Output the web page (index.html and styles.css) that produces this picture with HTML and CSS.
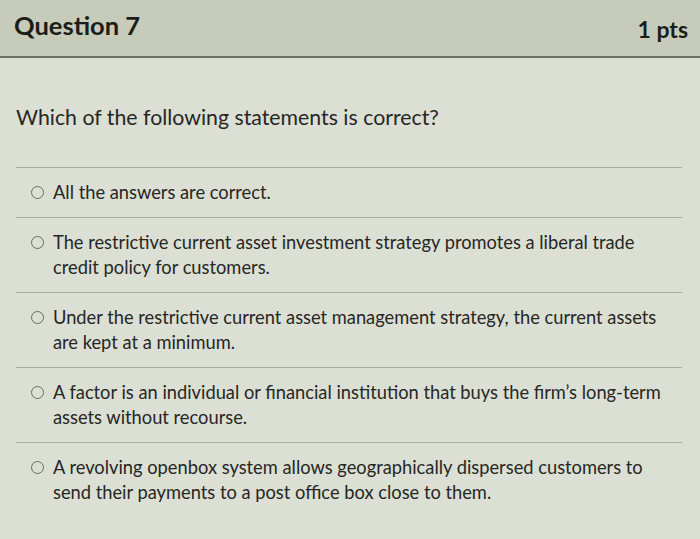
FILE: index.html
```html
<!DOCTYPE html>
<html>
<head>
<meta charset="utf-8">
<link rel="stylesheet" href="styles.css">
</head>
<body>
<div class="quiz">
  <div class="header">
    <div class="title">Question 7</div>
    <div class="pts">1 pts</div>
  </div>
  <div class="content">
    <p class="question">Which of the following statements is correct?</p>
    <ul class="answers">
      <li class="answer"><span class="radio"></span><span class="label">All the answers are correct.</span></li>
      <li class="answer"><span class="radio"></span><span class="label">The restrictive current asset investment strategy promotes a liberal trade credit policy for customers.</span></li>
      <li class="answer"><span class="radio"></span><span class="label">Under the restrictive current asset management strategy, the current assets are kept at a minimum.</span></li>
      <li class="answer"><span class="radio"></span><span class="label">A factor is an individual or financial institution that buys the firm’s long-term assets without recourse.</span></li>
      <li class="answer"><span class="radio"></span><span class="label">A revolving openbox system allows geographically dispersed customers to send their payments to a post office box close to them.</span></li>
    </ul>
  </div>
</div>
</body>
</html>
```

FILE: styles.css
```css
html, body {
  margin: 0;
  padding: 0;
  background: #dcdfd3;
}
body {
  width: 700px;
  height: 539px;
  overflow: hidden;
  font-family: Lato, "Open Sans", sans-serif;
  color: #262724;
}
.quiz {
  width: 700px;
  height: 539px;
  background: #dcdfd3;
}
.header {
  height: 56px;
  background: #c7cbb9;
  border-bottom: 2px solid #6d6f67;
  display: flex;
  justify-content: space-between;
  align-items: center;
  padding: 0 12px 0 14px;
  box-sizing: content-box;
}
.title {
  font-size: 25.5px;
  font-weight: 700;
  color: #1c1d1a;
  margin-top: -6px;
}
.pts {
  font-size: 23px;
  font-weight: 700;
  color: #1c1d1a;
  margin-top: 2px;
}
.content {
  padding: 0 18px 0 16px;
}
.question {
  margin: 0;
  padding: 45px 0 36px 0;
  font-size: 21.3px;
  line-height: 28px;
  color: #262724;
  border-bottom: 1px solid #a9ad9f;
}
.answers {
  list-style: none;
  margin: 0;
  padding: 0;
}
.answer {
  display: flex;
  align-items: flex-start;
  gap: 9px;
  padding: 12px 0 12px 15px;
  border-bottom: 1px solid #a9ad9f;
  font-size: 18.3px;
  line-height: 25px;
}
.answer:last-child {
  border-bottom: none;
}
.radio {
  flex: none;
  width: 11px;
  height: 11px;
  border: 1.5px solid #6a6b66;
  border-radius: 50%;
  margin-top: 5.5px;
}
.label {
  width: 615px;
}
```
